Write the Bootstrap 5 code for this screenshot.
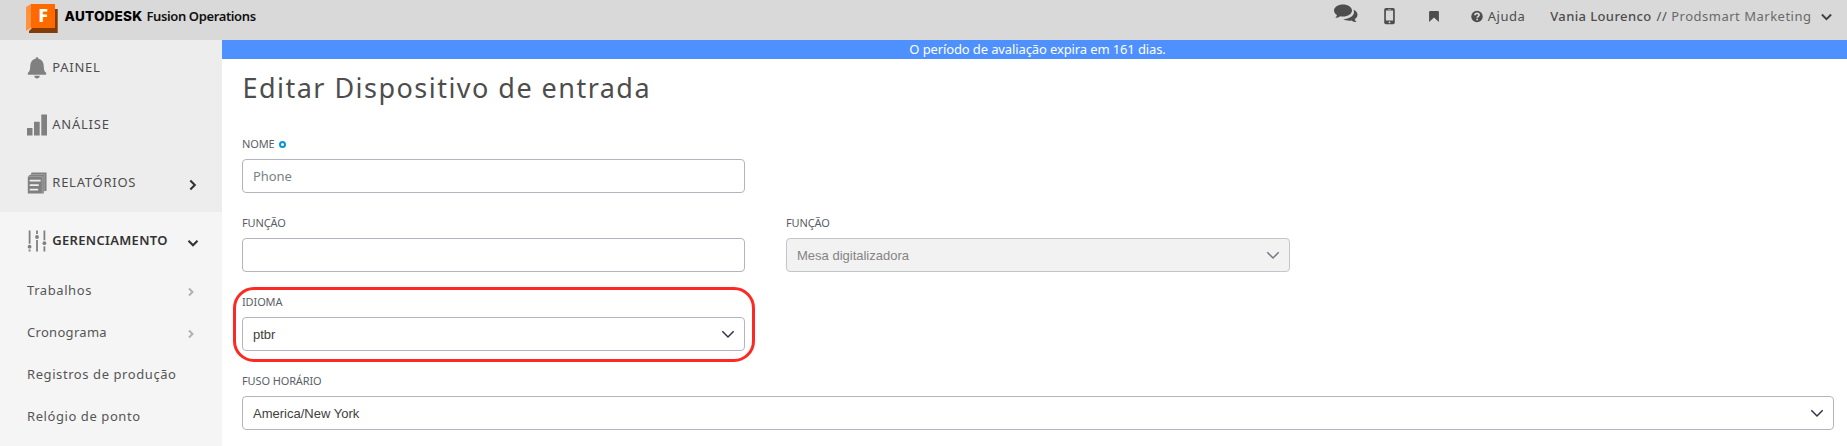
<!DOCTYPE html>
<html lang="pt-br">
<head>
<meta charset="utf-8">
<meta name="viewport" content="width=device-width, initial-scale=1">
<title>Fusion Operations</title>
<link rel="stylesheet" href="https://cdn.jsdelivr.net/npm/bootstrap@5.3.0/dist/css/bootstrap.min.css">
<style>
  body { font-family: "Noto Sans", sans-serif; font-size: 13px; line-height: 20px; color: #4d4d4d; height: 100vh; overflow: hidden; }
  svg { display: block; flex: none; }
  .topbar { height: 40px; background: #d9d9d9; padding: 0 15.500px 0 26px; }
  .brand-name { font-family: Inter, sans-serif; font-weight: 800; font-size: 13.5px; letter-spacing: .25px; color: #000; margin-left: 6.500px; line-height: 32px; }
  .brand-product { font-weight: 600; letter-spacing: -.38px; color: #111; margin-left: 4px; line-height: 32px; }
  .tools { letter-spacing: .5px; line-height: 33px; height: 33px; }
  .user-name { font-weight: 500; letter-spacing: .39px; }
  .user-org { color: #6a6a6a; }
  .sidebar { width: 222px; background: #f5f5f5; flex: none; }
  .main-links { background: #ededed; height: 172px; }
  .main-item { height: 58px; padding: 0 24.500px 0 27px; letter-spacing: .75px; }
  .main-item:first-child { height: 56px; padding-bottom: 1px; }
  .main-item span { margin-left: 5.300px; padding-bottom: 2px; flex: 1; }
  .main-item.current { font-weight: 600; letter-spacing: .31px; color: #333; padding-right: 23.500px; }
  .sub-item { height: 42px; padding: 0 28px 2px 27px; letter-spacing: .58px; color: #555; }
  .sub-item svg { margin-top: 3px; }
  .trial { height: 19px; line-height: 18px; background: #4d90fe; color: #fff; letter-spacing: -.12px; padding-left: 6px; }
  .content-area { padding: 0 13px 0 20px; }
  h1 { font-size: 27px; line-height: 57px; letter-spacing: 1.47px; margin: 0 0 20px; font-weight: 400; padding-left: .5px; }
  .field { margin-bottom: 22px; position: relative; }
  .half { width: 503px; }
  .half.wide { width: 504px; }
  .form-label { font-size: 11px; line-height: 16px; letter-spacing: -.12px; color: #5b6068; margin-bottom: 7px; display: flex; align-items: center; }
  .required-dot { width: 7px; height: 7px; border: 2px solid #0696d7; border-radius: 50%; margin-left: 4px; }
  .form-control, .form-select { height: 34px; padding: 0 10px; font-size: 13px; border: 1px solid #b4b4c0; border-radius: 4px; }
  .form-control::placeholder { color: #7a8188; letter-spacing: -.05px; }
  .form-select { font-family: "Liberation Sans", Arial, sans-serif; color: #404040; padding-top: 2px;
    background-image: url("data:image/svg+xml,%3csvg xmlns='http://www.w3.org/2000/svg' viewBox='0 0 14 9'%3e%3cpath fill='none' stroke='%23333348' stroke-width='1.5' d='M1.3 1.3 7 7l5.7-5.7'/%3e%3c/svg%3e");
    background-size: 14px 9px; background-position: right 9px center; }
  .form-select:disabled { background-color: #f2f2f2; color: #858585; border-color: #c2c5c9; opacity: 1;
    background-image: url("data:image/svg+xml,%3csvg xmlns='http://www.w3.org/2000/svg' viewBox='0 0 14 9'%3e%3cpath fill='none' stroke='%23777783' stroke-width='1.5' d='M1.3 1.3 7 7l5.7-5.7'/%3e%3c/svg%3e"); }
  .callout { position: absolute; inset: -7px -10px -11px -9px; border: 3px solid #fc2a22; border-radius: 21px; pointer-events: none; }
</style>
</head>
<body>
<header class="topbar d-flex align-items-start justify-content-between">
  <div class="d-flex align-items-start">
    <svg width="32" height="34" viewBox="0 0 32 34">
      <path fill="#ff9142" d="M0 7 5 4v24l-5 3z"/>
      <path fill="#843c04" d="M29 9h2.700v24H3v-2l3-3h23z"/>
      <path fill="#ff6a00" d="M5 4h24v24H5z"/>
      <text x="12.300" y="22.200" font-family="Noto Sans, sans-serif" font-weight="800" font-size="18" fill="#fff">F</text>
    </svg>
    <span class="brand-name">AUTODESK</span>
    <span class="brand-product">Fusion Operations</span>
  </div>
  <div class="tools d-flex align-items-start">
    <svg width="24" height="24" viewBox="0 0 24 24" fill="#4d4d4d">
      <path d="M9 4.500c5 0 9 2.700 9 6s-4 6.100-9 6.100c-1 0-1.900-.1-2.800-.3-1.500 1-3.100 1.500-4.900 1.500.9-.8 1.500-1.600 1.700-2.700C1.200 14 0 12.300 0 10.500c0-3.300 4-6 9-6z"/>
      <path d="M19.300 8.300c2.600.9 4.200 2.700 4.200 4.900 0 1.700-1 3.300-2.800 4.400.2 1.100.8 2 1.700 2.900-1.800 0-3.400-.5-4.900-1.500-3.100.6-6.200-.1-8.200-1.500 6-.1 10.700-3.100 10.700-7.100 0-.7-.3-1.400-.7-2.100z" transform="translate(0 1.500)"/>
    </svg>
    <svg style="margin-left:26px" width="11" height="26" viewBox="0 0 11 26">
      <rect x=".2" y="8" width="10.600" height="16.200" rx="1.800" fill="#4d4d4d"/>
      <path fill="#d9d9d9" d="M1.900 10.600h7.200v9.800H1.900zM4 8.900h3v.6H4z"/><circle cx="5.500" cy="22.300" r=".9" fill="#d9d9d9"/>
    </svg>
    <svg style="margin-left:34px" width="10" height="26" viewBox="0 0 10 26"><path fill="#4d4d4d" d="M1 11h8q.9 0 .9.900V22L5 17.600.1 22V11.900Q.1 11 1 11z"/></svg>
    <svg style="margin-left:32px" width="12" height="26" viewBox="0 0 12 26">
      <circle cx="6" cy="16.500" r="5.700" fill="#4d4d4d"/>
      <path fill="none" stroke="#d9d9d9" stroke-width="1.700" d="M3.900 15.200c.2-2.600 4.300-2.400 4.200-.1 0 1.200-1.900 1.300-1.900 2.700"/><path fill="#d9d9d9" d="M5.300 18.700H7v1.600H5.300z"/>
    </svg>
    <span style="margin-left:4.500px">Ajuda</span>
    <span class="user-name" style="margin-left:25px">Vania Lourenco</span>
    <span style="margin-left:5px">//</span>
    <span class="user-org" style="margin-left:4px">Prodsmart Marketing</span>
    <svg style="margin-left:9px" width="11" height="24" viewBox="0 0 11 24"><path fill="none" stroke="#404040" stroke-width="1.900" d="m.9 14.500 4.600 4.600 4.600-4.600"/></svg>
  </div>
</header>
<div class="d-flex align-items-stretch" style="height:406px">
  <nav class="sidebar">
    <div class="main-links">
      <div class="main-item d-flex align-items-center">
        <svg width="20" height="22" viewBox="0 0 20 22" fill="#808080"><path d="M10 .3c.9 0 1.400.6 1.400 1.500 3.300.7 5.100 3.200 5.300 6.500.2 4.500.6 6 2.500 7.700q.5 1.600-.8 1.700H1.600Q.3 17.600.8 16c1.900-1.700 2.300-3.200 2.500-7.700.2-3.300 2-5.800 5.300-6.500 0-.9.500-1.500 1.400-1.500zM7.200 18.700h5.600c-.2 1.800-1.300 2.700-2.800 2.700s-2.600-.9-2.800-2.700z"/></svg>
        <span>PAINEL</span>
      </div>
      <div class="main-item d-flex align-items-center">
        <svg width="20" height="22" viewBox="0 0 20 22" fill="#808080"><path d="M0 14h5.500v7.500H0zM7 7.700h5.700v13.800H7zM14.300.5H20v21h-5.700z"/></svg>
        <span>ANÁLISE</span>
      </div>
      <div class="main-item d-flex align-items-center">
        <svg width="20" height="22" viewBox="0 0 20 22">
          <path fill="#808080" d="M5 .5h14.500v18.600h-3V4H3.700l.5-3z"/><path fill="none" stroke="#b8b8b8" stroke-width=".5" d="M3 2.500h14.300v17"/>
          <path fill="#808080" d="M2.500 3h14.300v18.500H.8V5z"/><path fill="none" stroke="#b8b8b8" stroke-width=".5" d="M1 4.400h14.300v17"/>
          <path stroke="#ededed" stroke-width="1.700" stroke-linecap="round" d="M3.400 8.700h9.500M3.400 13.200h7.700M3.400 17.700h7"/>
        </svg>
        <span>RELATÓRIOS</span>
        <svg class="mt-1" width="10" height="12" viewBox="0 0 10 12"><path fill="none" stroke="#333" stroke-width="2.100" d="m2.300 1.500 4.500 4.500-4.500 4.500"/></svg>
      </div>
    </div>
    <div class="main-item current d-flex align-items-center">
      <svg width="20" height="22" viewBox="0 0 20 22" fill="#808080"><path d="M1.700.5h1.800v13.200H1.700zM1.700 19.600h1.800v1.900H1.700zM9.100.5h1.800V4H9.100zM9.100 10h1.800v11.500H9.100zM16.500.5h1.800v9.700h-1.800zM16.500 16.200h1.800v5.300h-1.800z"/><circle cx="2.600" cy="16.700" r="1.900"/><circle cx="10" cy="7" r="1.900"/><circle cx="17.400" cy="13.200" r="1.900"/></svg>
      <span>GERENCIAMENTO</span>
      <svg class="mt-1" width="12" height="10" viewBox="0 0 12 10"><path fill="none" stroke="#333" stroke-width="2.100" d="m1.500 2.700 4.500 4.500 4.500-4.500"/></svg>
    </div>
    <div class="sub-item d-flex align-items-center justify-content-between">Trabalhos
      <svg width="6" height="10" viewBox="0 0 6 10"><path fill="none" stroke="#b0b0b0" stroke-width="1.900" d="m1 1.500 3.500 3.500L1 8.500"/></svg></div>
    <div class="sub-item d-flex align-items-center justify-content-between" style="letter-spacing:.3px">Cronograma
      <svg width="6" height="10" viewBox="0 0 6 10"><path fill="none" stroke="#b0b0b0" stroke-width="1.900" d="m1 1.500 3.500 3.500L1 8.500"/></svg></div>
    <div class="sub-item d-flex align-items-center">Registros de produção</div>
    <div class="sub-item d-flex align-items-center">Relógio de ponto</div>
  </nav>
  <main class="flex-grow-1">
    <div class="trial text-center">O período de avaliação expira em 161 dias.</div>
    <form class="content-area">
      <h1>Editar Dispositivo de entrada</h1>
      <div class="field half">
        <label class="form-label">NOME <i class="required-dot"></i></label>
        <input class="form-control" placeholder="Phone">
      </div>
      <div class="d-flex" style="gap:41px">
        <div class="field half">
          <label class="form-label">FUNÇÃO</label>
          <input class="form-control">
        </div>
        <div class="field half wide">
          <label class="form-label">FUNÇÃO</label>
          <select class="form-select" disabled><option>Mesa digitalizadora</option></select>
        </div>
      </div>
      <div class="field half">
        <label class="form-label">IDIOMA</label>
        <select class="form-select"><option>ptbr</option></select>
        <div class="callout"></div>
      </div>
      <div class="field mb-0">
        <label class="form-label">FUSO HORÁRIO</label>
        <select class="form-select"><option>America/New York</option></select>
      </div>
    </form>
  </main>
</div>
<script src="https://cdn.jsdelivr.net/npm/bootstrap@5.3.0/dist/js/bootstrap.bundle.min.js"></script>
</body>
</html>
